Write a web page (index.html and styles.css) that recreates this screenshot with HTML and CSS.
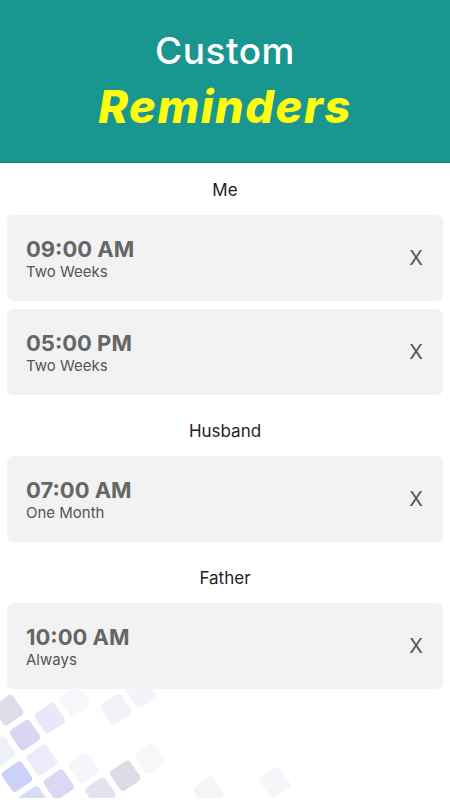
FILE: index.html
```html
<!DOCTYPE html>
<html lang="en">
    <head>
        <meta charset="UTF-8">
        <meta name="viewport" content="width=device-width, initial-scale=1.0">
        <title>Custom Reminders</title>

        <link rel="stylesheet" href="styles.css">

    </head>
    <body>
        <header class="banner">
            <div class="banner-light">Custom</div>
            <div class="banner-bold">Reminders</div>
        </header>

        <main class="reminders">
            <section class="person">
                <h2 class="person-name">Me</h2>
                <div class="card">
                    <div class="card-text">
                        <div class="card-time">09:00 AM</div>
                        <div class="card-repeat">Two Weeks</div>
                    </div>
                    <span class="card-remove">X</span>
                </div>
                <div class="card">
                    <div class="card-text">
                        <div class="card-time">05:00 PM</div>
                        <div class="card-repeat">Two Weeks</div>
                    </div>
                    <span class="card-remove">X</span>
                </div>
            </section>

            <section class="person">
                <h2 class="person-name">Husband</h2>
                <div class="card">
                    <div class="card-text">
                        <div class="card-time">07:00 AM</div>
                        <div class="card-repeat">One Month</div>
                    </div>
                    <span class="card-remove">X</span>
                </div>
            </section>

            <section class="person">
                <h2 class="person-name">Father</h2>
                <div class="card">
                    <div class="card-text">
                        <div class="card-time">10:00 AM</div>
                        <div class="card-repeat">Always</div>
                    </div>
                    <span class="card-remove">X</span>
                </div>
            </section>
        </main>

        <!-- decorative tiles at the bottom -->
        <svg class="tiles" width="450" height="110" viewBox="0 0 450 110">
            <g transform="translate(25 47) rotate(-34.2)">
                <rect x="-12" y="-12" width="24" height="24" rx="4" fill="#d8d6f2"/>
                <rect x="18" y="-12" width="24" height="24" rx="4" fill="#e9e7f8"/>
                <rect x="-12" y="-42" width="24" height="24" rx="4" fill="#dddce9"/>
                <rect x="48" y="-12" width="24" height="24" rx="4" fill="#f7f6fb"/>
                <rect x="78" y="18" width="24" height="24" rx="4" fill="#f2f1f7"/>
                <rect x="108" y="18" width="24" height="24" rx="4" fill="#f5f2fa"/>
                <rect x="-12" y="18" width="24" height="24" rx="4" fill="#ecebfa"/>
                <rect x="-42" y="-12" width="24" height="24" rx="4" fill="#eef0f8"/>
                <rect x="-42" y="18" width="24" height="24" rx="4" fill="#ccd2f7"/>
                <rect x="-12" y="48" width="24" height="24" rx="4" fill="#dcd8f4"/>
                <rect x="-42" y="48" width="24" height="24" rx="4" fill="#d3def5"/>
                <rect x="18" y="48" width="24" height="24" rx="4" fill="#f6f6fa"/>
                <rect x="18" y="78" width="24" height="24" rx="4" fill="#e3e2ef"/>
                <rect x="48" y="78" width="24" height="24" rx="4" fill="#dcdbe8"/>
                <rect x="78" y="78" width="24" height="24" rx="4" fill="#f7f7fa"/>
                <rect x="108" y="138" width="24" height="24" rx="4" fill="#f5f5f8"/>
                <rect x="168" y="168" width="24" height="24" rx="4" fill="#f7f4fa"/>
            </g>
        </svg>
    </body>
</html>
```

FILE: styles.css
```css
* {
    box-sizing: border-box;
}

body {
    margin: 0;
    background-color: #ffffff;
    font-family: Inter, "Noto Sans", sans-serif;
    overflow: hidden;
}

.banner {
    height: 163px;
    background-color: #1a9690;
    border-bottom: 1px solid #1c716d;
    text-align: center;
    padding-top: 28px;
}

.banner-light {
    color: #ffffff;
    font-size: 37px;
    line-height: 46px;
    font-weight: 500;
    letter-spacing: 0.5px;
}

.banner-bold {
    margin-top: 5px;
    color: #ffff0d;
    font-size: 45px;
    line-height: 56px;
    font-weight: 800;
    font-style: italic;
    letter-spacing: 1.6px;
}

.reminders {
    padding: 0 7px;
}

.person {
    display: flex;
    flex-direction: column;
    gap: 8px;
    margin-top: 26px;
}

.person:first-child {
    margin-top: 17px;
}

.person-name {
    margin: 0 0 7px;
    text-align: center;
    font-size: 17px;
    line-height: 20px;
    font-weight: 400;
    color: #222222;
}

.card {
    display: flex;
    align-items: center;
    justify-content: space-between;
    height: 86px;
    padding: 0 20px 0 19px;
    background-color: #f2f2f2;
    border-radius: 6px;
}

.card-time {
    font-size: 22px;
    line-height: 26px;
    font-weight: 700;
    color: #666666;
}

.card-repeat {
    font-size: 15px;
    line-height: 19px;
    color: #555555;
}

.card-remove {
    font-size: 20px;
    color: #555555;
}

.tiles {
    display: block;
    margin-top: -1px;
}
```
